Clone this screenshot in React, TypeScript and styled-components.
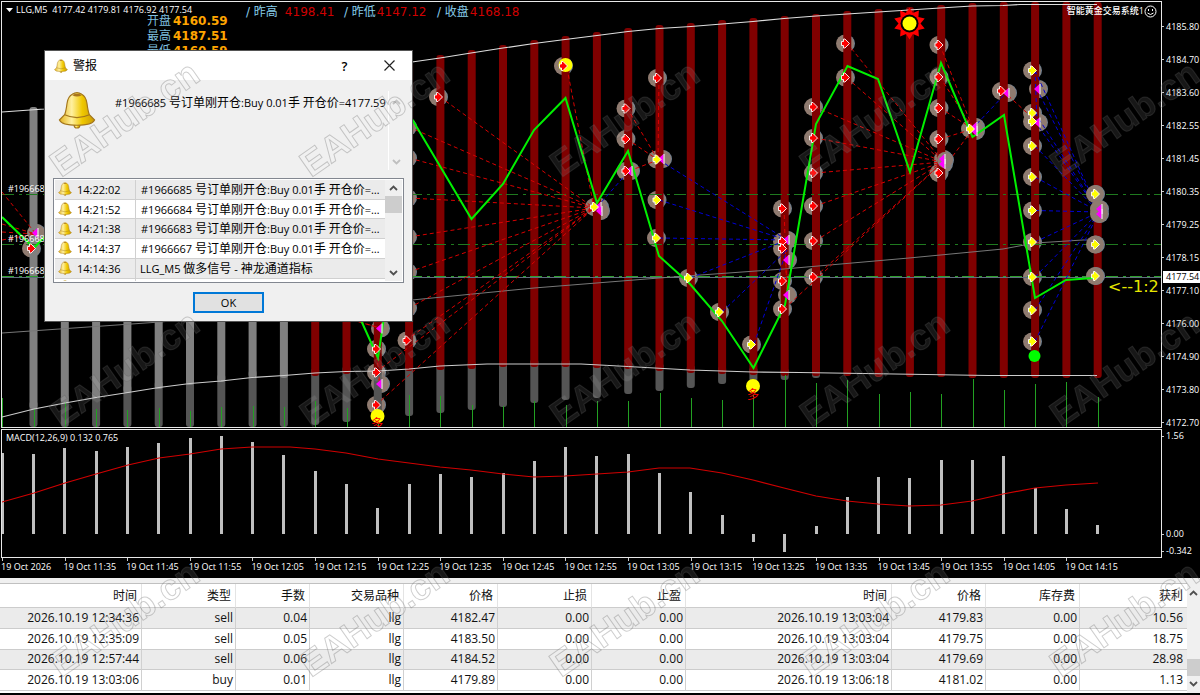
import React from "react";
import styled, { createGlobalStyle } from "styled-components";

const LATIN = '"Open Sans", "Noto Sans CJK SC", sans-serif';
const VERDANA = '"DejaVu Sans", "Noto Sans CJK SC", sans-serif';

const GlobalStyle = createGlobalStyle`
  * { box-sizing: border-box; }
  body { margin: 0; background: #000; font-family: ${LATIN}; }
  button { font-family: inherit; padding: 0; }
`;

/* ---------- chart data ---------- */

type Pt = [number, number];
const barX = (k: number) => 2.2 + 31.3 * k;
const line = (pts: Pt[]) => pts.map((p) => p.join(",")).join(" ");

const barTops = [
  0, 107, 107, 107, 107, 107, 107, 107, 107, 107, 107, 107, 107, 62, 55, 50, 45, 40, 36, 32, 28, 25, 23, 20, 18, 16, 14, 11, 9,
  7, 5, 3, 2, 2, 2, 2,
];
const bandEnds = [
  0, 409, 403, 398, 393, 389, 385, 382, 378, 378, 376, 374, 373, 371, 370, 369, 367, 367, 367, 368, 369, 371, 373, 374, 375, 376,
  376, 376, 377, 377, 377, 378, 378, 378, 378, 378,
];
const tailEnds = [
  0, 427, 427, 427, 427, 427, 427, 427, 427, 427, 425, 422, 418, 416, 413, 410, 407, 403, 400, 398, 394, 391, 388, 384, 382, 380,
  378,
];
const volumeTops = [
  398, 409, 402, 409, 410, 408, 411, 407, 406, 407, 401, 408, 412, 395, 396, 405, 406, 401, 405, 401, 401, 393, 398, 400, 395,
  375, 383, 380, 394, 392, 394, 379, 390, 384, 382, 397,
];
const macdEnds = [
  453, 454, 448, 451, 447, 443, 438, 436, 442, 455, 471, 484, 508, 484, 474, 477, 473, 461, 447, 456, 454, 473, 492, 515, 542,
  552, 526, 497, 477, 478, 460, 460, 456, 488, 509, 525,
];
const macdSignal: Pt[] = [
  [2, 502], [34, 493], [65, 483], [96, 474], [128, 465], [159, 458], [190, 454], [221, 449], [252, 447], [290, 447],
  [315, 449], [346, 453], [378, 459], [409, 463], [440, 467], [471, 470], [503, 474], [534, 477], [565, 476], [597, 474],
  [628, 472], [659, 468], [690, 468], [722, 473], [753, 480], [784, 488], [816, 496], [847, 501], [878, 504], [909, 506],
  [941, 505], [972, 501], [1003, 494], [1035, 488], [1066, 485], [1098, 483],
];
const upperBand: Pt[] = [
  [2, 112], [44, 109], [412, 62], [440, 58], [471, 53], [503, 48], [534, 43.5], [565, 39.5], [597, 35.5], [628, 31.5],
  [659, 28.5], [691, 26.5], [722, 24], [753, 21.5], [784, 18.5], [816, 16], [847, 14], [878, 12], [909, 10], [940, 8],
  [972, 6], [1003, 5.5], [1020, 4.5], [1097, 4.5],
];
const lowerBand: Pt[] = [
  [2, 417], [34, 409], [65, 403], [96, 397.5], [128, 392.5], [159, 387.5], [190, 383.5], [221, 381], [252, 377.5],
  [284, 375.5], [315, 373], [346, 371.5], [378, 371], [409, 369], [440, 366], [487, 364], [581, 364], [628, 366.5],
  [690, 370], [753, 372], [800, 372.5], [926, 374.5], [988, 375.5], [1097, 375.5],
];
const midBand: Pt[] = [
  [2, 333], [160, 322], [412, 300], [534, 288], [659, 278], [784, 269], [909, 258], [1003, 249], [1035, 243], [1083, 240],
  [1097, 240],
];
const priceLine: Pt[] = [
  [2, 217], [34, 248], [60, 220], [340, 275], [360, 318], [378, 358], [385, 310], [400, 90], [412, 119], [471.5, 219],
  [503, 184], [534, 130], [565.5, 98], [597, 203], [628, 151], [659, 256], [690, 284], [722, 321], [753.5, 368], [785, 305],
  [816, 124], [847.5, 66], [878, 79], [910, 172], [941, 63], [972.5, 137], [1004, 115], [1035, 298], [1066, 280], [1093, 278],
];

const fan = (target: Pt, sources: Pt[]): [Pt, Pt][] => sources.map((s) => [s, target]);
const k26: number[] = [107, 138, 173, 206, 241, 277];
const k33: number[] = [70.5, 113, 121.5, 146, 177, 210.5, 242, 277, 310, 341.5];

const redLinks: [Pt, Pt][] = [
  ...fan([594, 208], [
    [440, 97], [567, 68], [409, 127], [409, 158], [409, 198], [409, 237], [409, 272], [409, 308], [406, 340], [376, 372],
    [376, 405],
  ]),
  ...fan([658, 160], [[627, 108], [627, 139], [659, 78], [629, 171]]),
  ...fan([943, 162], [...k26.map((y): Pt => [815, y]), [847, 43], [847, 78], [784, 309]]),
  ...fan([973, 129], [[940, 45], [940, 77], [940, 108], [940, 139], [940, 173]]),
  ...fan([787, 295], [[784, 208], [785, 241]]),
  ...fan([1037, 122], [[1003, 91]]),
  ...fan([380, 328], [[345, 318], [360, 322]]),
  ...fan([380, 384], [[376, 349], [376, 372]]),
  ...fan([36, 234], [[2, 192], [2, 224], [2, 232], [2, 240]]),
];
const blueLinks: [Pt, Pt][] = [
  ...fan([787, 240], [[659, 160], [659, 200], [659, 238], [690, 278]]),
  ...fan([787, 250], [[722, 312], [754, 344]]),
  ...fan([629, 171], [[597, 207]]),
  ...fan([1006, 93], [[972, 129]]),
  ...fan([1037, 122], [[1035, 70]]),
  ...fan([1099, 212], [...k33.map((y): Pt => [1035, y]), [1037, 89]]),
];

const redMarks: Pt[] = [
  [438, 97], [563, 66], [625.5, 108.5], [625.5, 139], [625.5, 171], [657, 78], [782, 208.5], [782, 241.5], [782, 248.5],
  [782, 281], [782, 309], ...k26.map((y): Pt => [813, y]), [845, 43.5], [845, 77.5], [938.5, 45], [938.5, 77],
  [938.5, 108], [938.5, 139], [938.5, 173], [1001, 91], [31, 248.5], [376, 349], [376, 372.5], [376, 405], [406.5, 340.5],
];
const yellowMarks: Pt[] = [
  [656.5, 159.5], [656.5, 200], [594, 207], [656, 238], [688, 278], [719, 312], [751, 344.5], [970, 129],
  ...k33.map((y): Pt => [1032, y]),
];
const frontYellow: Pt[] = [[1095, 194], [1095, 244.5], [1095, 276]];
const closeMarks: Pt[] = [
  [629, 171], [661, 159], [598, 207], [599, 211], [786, 240], [786, 260], [786, 295], [942, 159], [942, 164], [974, 127],
  [974, 131], [1006, 93], [1037, 89], [1037, 122.5], [35, 233], [379, 328.5], [379, 384],
];
const hiddenHalos: Pt[] = [[407, 127], [407, 158], [407, 198], [407, 237], [407, 272], [407, 308]];

const prices = [
  "4185.80", "4184.70", "4183.60", "4182.55", "4181.45", "4180.35", "4179.25", "4178.15", "4177.10", "4176.00", "4174.90",
  "4173.80", "4172.70",
];
const times = [
  "2026", "11:35", "11:45", "11:55", "12:05", "12:15", "12:25", "12:35", "12:45", "12:55", "13:05", "13:15", "13:25", "13:35",
  "13:45", "13:55", "14:05", "14:15",
];

const sunPoints = Array.from({ length: 20 }, (_, i) => {
  const r = i % 2 ? 11 : 16;
  const a = (i * Math.PI) / 10 - Math.PI / 2;
  return `${(909.5 + r * Math.cos(a)).toFixed(1)},${(23.5 + r * Math.sin(a)).toFixed(1)}`;
}).join(" ");

/* ---------- chart layout ---------- */

const Terminal = styled.main`
  position: relative;
  overflow: hidden;
  background: #000;
  color: #fff;
`;

const ChartRow = styled.section`
  display: grid;
  grid-template-columns: minmax(0, 1fr) 38px;
  padding: 1px 0 0 1px;
`;

const Panel = styled.div<{ $h: number }>`
  position: relative;
  height: ${(p) => p.$h}px;
  border: 1px solid #e8e8e8;
  overflow: hidden;
`;

const Plot = styled.svg`
  display: block;
  width: 100%;
  height: 100%;
`;

const PriceScale = styled.div`
  position: relative;
  padding-top: 9px;
  height: 427px;
`;

const ScaleLabel = styled.div<{ $h: number }>`
  display: flex;
  align-items: center;
  gap: 2px;
  height: ${(p) => p.$h}px;
  font-size: 9px;
  line-height: 12px;
  white-space: nowrap;
  &::before {
    content: "";
    width: 2px;
    height: 1px;
    background: #ccc;
  }
`;

const MacdScale = styled.div`
  display: flex;
  flex-direction: column;
  gap: 3px;
  height: 129px;
`;

const Spacer = styled.div`
  flex: 1;
`;

const CurrentPrice = styled.div`
  position: absolute;
  top: 270px;
  left: 1px;
  right: 0;
  height: 12px;
  padding-left: 3px;
  background: #fff;
  color: #000;
  font-size: 9px;
  line-height: 12px;
`;

const TimeScale = styled.div`
  display: flex;
  height: 20px;
  padding: 0 72px 0 1px;
`;

const TimeLabel = styled.div`
  flex: 1 1 0;
  min-width: 0;
  padding-top: 2px;
  font-size: 9px;
  line-height: 14px;
  white-space: nowrap;
  background: linear-gradient(#ccc, #ccc) 1px 0 / 1px 3px no-repeat;
`;

const ChartTitle = styled.div`
  position: absolute;
  top: 1px;
  left: 4px;
  display: flex;
  align-items: center;
  gap: 3px;
  font-size: 9px;
  line-height: 14px;
  white-space: pre;
`;

const EaName = styled.div`
  position: absolute;
  top: 2px;
  right: 4px;
  display: flex;
  align-items: center;
  font-size: 9px;
  line-height: 14px;
  font-weight: 500;
`;

const DayPrices = styled.div`
  position: absolute;
  top: 12px;
  left: 145px;
  font-family: ${VERDANA};
  font-size: 12px;
  line-height: 15px;
  color: #7fbfdf;
`;

const DayPrice = styled.div`
  display: flex;
  gap: 2px;
  b {
    color: #ffa500;
  }
`;

const Yesterday = styled.div`
  position: absolute;
  top: 2px;
  left: 244px;
  display: flex;
  font-family: ${VERDANA};
  font-size: 12px;
  line-height: 16px;
  color: #87ceeb;
  white-space: pre;
  em {
    font-style: normal;
    color: #d00000;
  }
`;

const YesterdayItem = styled.div<{ $w: number; $gap: number }>`
  display: flex;
  gap: ${(p) => p.$gap}px;
  width: ${(p) => p.$w}px;
`;

const Halo = ({ p, r = 9 }: { p: Pt; r?: number }) => (
  <g>
    <circle cx={p[0] + 1} cy={p[1]} r={r} fill="#708090" />
    <circle cx={p[0]} cy={p[1]} r={r} fill="#8f7b70" />
  </g>
);

const Diamond = ({ p, color }: { p: Pt; color: string }) => (
  <path
    transform={`translate(${p[0]} ${p[1]})`}
    d="M-3.500 -2 H-1.500 V-4.500 H0 L4.500 0 L0 4.500 H-1.500 V2 H-3.500 Z"
    fill={color}
    stroke="#fff"
    strokeWidth="0.900"
  />
);

const CloseArrow = ({ p }: { p: Pt }) => (
  <g transform={`translate(${p[0]} ${p[1]})`}>
    <path d="M2.500 -5 V5 L-3 0 Z" fill="#ff00ff" />
    <path d="M3 -5 V5" stroke="#fff" strokeWidth="1" />
  </g>
);

const PriceChart = () => (
  <Plot viewBox="2 2 1159 425" preserveAspectRatio="xMinYMin slice" aria-label="LLG M5">
    <g>
      {hiddenHalos.map((p, i) => <Halo key={i} p={p} />)}
      {redMarks.map((p, i) => <Halo key={i} p={p} />)}
      {yellowMarks.map((p, i) => <Halo key={i} p={p} />)}
      {closeMarks.map((p, i) => <Halo key={i} p={[p[0] + 1, p[1]]} />)}
    </g>
    {barTops.map((top, k) =>
      k === 0 ? null : (
        <g key={k}>
          {tailEnds[k] && <rect x={barX(k) - 4} y={bandEnds[k] - 8} width={8} height={tailEnds[k] - bandEnds[k] + 8} rx={3} fill="#555" />}
          <rect x={barX(k) - 4} y={top} width={8} height={bandEnds[k] - top} rx={3} fill={k < 10 ? "#808080" : "#800000"} />
        </g>
      )
    )}
    <g stroke="#1f7a1f" strokeDasharray="12 5 3 4">
      <path d="M2 194.500 H1161 M2 244.500 H1161" />
    </g>
    <path d="M2 277.500 H1161" stroke="#5f6f7f" />
    <path d="M2 276.500 H1161" stroke="#2ea02e" strokeDasharray="12 5 3 4" />
    <polyline points={line(midBand)} fill="none" stroke="#777" />
    <g stroke="#22a022">
      {volumeTops.map((y, k) => <path key={k} d={`M${Math.round(barX(k)) + 0.5} ${y} V427`} />)}
    </g>
    <polyline points={line(upperBand)} fill="none" stroke="#ddd" strokeWidth="1.2" />
    <polyline points={line(lowerBand)} fill="none" stroke="#ccc" strokeWidth="1.2" />
    <g stroke="#d80000" strokeDasharray="4 3">
      {redLinks.map(([a, b], i) => <path key={i} d={`M${a} L${b}`} />)}
    </g>
    <g stroke="#0000d8" strokeDasharray="4 3">
      {blueLinks.map(([a, b], i) => <path key={i} d={`M${a} L${b}`} />)}
    </g>
    <circle cx="565.5" cy="65" r="7" fill="#ff0" />
    {frontYellow.map((p, i) => <Halo key={i} p={p} />)}
    <Halo p={[1099, 209]} r={9} />
    <Halo p={[1099, 214]} r={9} />
    <Halo p={[945, 160]} r={8} />
    <polyline points={line(priceLine)} fill="none" stroke="#00f000" strokeWidth="2" />
    {closeMarks.map((p, i) => <CloseArrow key={i} p={p} />)}
    <CloseArrow p={[1099, 209]} />
    <CloseArrow p={[1099, 214]} />
    {redMarks.map((p, i) => <Diamond key={i} p={p} color="#f00" />)}
    {[...yellowMarks, ...frontYellow].map((p, i) => <Diamond key={i} p={p} color="#ff0" />)}
    <polygon points={sunPoints} fill="#f00" />
    <circle cx="909.5" cy="23.5" r="9" fill="#000" />
    <circle cx="909.5" cy="23.5" r="7" fill="#ff0" />
    <circle cx="1034.500" cy="356" r="6" fill="#0f0" />
    <g fontSize="12" fill="#f00" textAnchor="middle" fontFamily='"Noto Sans CJK SC", sans-serif'>
      <circle cx="753" cy="386" r="7" fill="#ff0" />
      <text x="753" y="399">多</text>
      <circle cx="377.500" cy="416" r="7" fill="#ff0" />
      <text x="377" y="428">多</text>
    </g>
    <g fontSize="9" fill="#fff">
      <text x="8" y="192">#1966685</text>
      <text x="8" y="242">#1966684</text>
      <text x="8" y="274">#1966683</text>
    </g>
    <text x="1108" y="292" fontSize="16" fill="#e6e600" fontFamily="DejaVu Sans">{"<--1:2"}</text>
  </Plot>
);

const MacdChart = () => (
  <Plot viewBox="2 430 1159 127" preserveAspectRatio="xMinYMin slice" aria-label="MACD">
    <g fill="#c0c0c0">
      {macdEnds.map((y, k) => (
        <rect key={k} x={Math.round(barX(k) - 1.5)} y={Math.min(y, 534)} width={3} height={Math.abs(534 - y)} />
      ))}
    </g>
    <polyline points={line(macdSignal)} fill="none" stroke="#d00000" strokeWidth="1.2" />
  </Plot>
);

/* ---------- alert window ---------- */

const Dialog = styled.section`
  position: absolute;
  top: 51px;
  left: 45px;
  width: 367px;
  height: 270px;
  display: flex;
  flex-direction: column;
  background: #f0f0f0;
  color: #000;
  font-size: 11px;
  box-shadow: 0 0 0 1px #555;
`;

const TitleBar = styled.header`
  display: flex;
  align-items: center;
  height: 29px;
  padding: 0 12px 0 9px;
  background: #fff;
`;

const DialogTitle = styled.h1`
  flex: 1;
  margin: 0 0 0 5px;
  font-size: 12px;
  font-weight: 400;
  line-height: 16px;
`;

const TitleButtons = styled.div`
  display: flex;
  gap: 24px;
`;

const TitleButton = styled.button`
  display: flex;
  justify-content: center;
  align-items: center;
  width: 21px;
  height: 24px;
  border: 0;
  background: none;
  color: #000;
  font-size: 13px;
  font-weight: 600;
`;

const Message = styled.div`
  display: grid;
  grid-template-columns: 57px minmax(0, 1fr) 16px;
  height: 98px;
  padding: 11px 8px 8px 13px;
`;

const MessageText = styled.p`
  margin: 0;
  padding-top: 4px;
  line-height: 16px;
  white-space: nowrap;
`;

const Cjk = styled.span`
  font-size: 12px;
`;

const MessageScroll = styled.div`
  display: flex;
  flex-direction: column;
  justify-content: space-between;
  align-items: center;
  padding: 8px 0 5px;
  border-left: 1px solid #fff;
`;

const ListFrame = styled.div`
  display: grid;
  grid-template-columns: minmax(0, 1fr) 17px;
  height: 105px;
  margin: 0 8px;
  padding: 1px;
  border: 1px solid #828790;
  background: #fff;
  overflow: hidden;
`;

const ListView = styled.div`
  height: 101px;
  overflow: hidden;
`;

const AlertTable = styled.table`
  width: 100%;
  height: 117px;
  border-collapse: separate;
  border-spacing: 0;
  table-layout: fixed;
  line-height: 15px;
  tr:nth-child(odd) td {
    background: #ebebeb;
  }
  td {
    padding: 0;
    border-bottom: 1px solid #d0d0d0;
    white-space: nowrap;
  }
`;

const TimeCell = styled.td`
  width: 81px;
  border-right: 1px solid #d0d0d0;
  span {
    display: flex;
    align-items: center;
    gap: 5px;
    padding-left: 3px;
  }
`;

const TextCell = styled.td<{ $indent: number }>`
  div {
    padding-left: ${(p) => p.$indent}px;
    overflow: hidden;
  }
`;

const Scroll = styled.div`
  display: flex;
  flex-direction: column;
  align-items: center;
  background: #f0f0f0;
`;

const Thumb = styled.div<{ $h: number }>`
  width: 100%;
  height: ${(p) => p.$h}px;
  background: #cdcdcd;
`;

const Arrow = styled.button`
  display: flex;
  align-items: center;
  justify-content: center;
  width: 13px;
  height: 16px;
  border: 0;
  background: none;
`;

const Actions = styled.footer`
  display: flex;
  justify-content: center;
  padding: 9px 0 0;
`;

const OkButton = styled.button`
  width: 71px;
  height: 21px;
  border: 2px solid #0078d7;
  background: #e1e1e1;
  color: #000;
  font-size: 11px;
  line-height: 15px;
`;

const Bell = ({ size, id }: { size: number; id: string }) => (
  <svg width={size} height={size} viewBox="0 0 40 40" aria-hidden="true">
    <defs>
      <linearGradient id={id} x1="0" x2="1">
        <stop offset="0" stopColor="#e3b21c" />
        <stop offset="0.35" stopColor="#fff0a0" />
        <stop offset="0.65" stopColor="#f0c800" />
        <stop offset="1" stopColor="#c99a06" />
      </linearGradient>
    </defs>
    <g fill={`url(#${id})`} stroke="#a3761c" strokeWidth="1.200">
      <circle cx="20" cy="36" r="3" />
      <path d="M15 3.500 Q20 0 25 3.500 Q29.500 6 30.500 13 Q31.500 21 33 25 L38.500 30.500 Q36 36 20 36 Q4 36 1.500 30.500 L7 25 Q8.500 21 9.500 13 Q10.500 6 15 3.500 Z" />
      <path d="M7 25 Q20 31 33 25" fill="none" />
    </g>
    <path d="M15 4.500 Q20 1.500 25 4.500 Q20 7 15 4.500 Z" fill="#a8741c" />
  </svg>
);

const Chevron = ({ down, color = "#505050" }: { down?: boolean; color?: string }) => (
  <svg width="9" height="6" viewBox="0 0 9 6" aria-hidden="true">
    <path d={down ? "M1 1 L4.500 4.500 L8 1" : "M1 5 L4.500 1.500 L8 5"} fill="none" stroke={color} strokeWidth="1.800" />
  </svg>
);

const CloseGlyph = () => (
  <svg width="11" height="11" viewBox="0 0 11 11" aria-hidden="true">
    <path d="M0.500 0.500 L10.500 10.500 M10.500 0.500 L0.500 10.500" stroke="#222" strokeWidth="1.200" />
  </svg>
);

const Mixed = ({ text }: { text: string }) => (
  <>
    {text.split(/([\u4e00-\u9fff]+)/).map((part, i) => (i % 2 ? <Cjk key={i}>{part}</Cjk> : part))}
  </>
);

const alerts = [
  ["14:22:02", "#1966685 号订单刚开仓:Buy 0.01手 开仓价=…"],
  ["14:21:52", "#1966684 号订单刚开仓:Buy 0.01手 开仓价=…"],
  ["14:21:38", "#1966683 号订单刚开仓:Buy 0.01手 开仓价=…"],
  ["14:14:37", "#1966667 号订单刚开仓:Buy 0.01手 开仓价=…"],
  ["14:14:36", "LLG_M5 做多信号 - 神龙通道指标"],
  ["", ""],
];

const AlertDialog = () => (
  <Dialog role="dialog" aria-label="警报">
    <TitleBar>
      <Bell size={14} id="bell-title" />
      <DialogTitle>警报</DialogTitle>
      <TitleButtons>
        <TitleButton aria-label="帮助">?</TitleButton>
        <TitleButton aria-label="关闭">
          <CloseGlyph />
        </TitleButton>
      </TitleButtons>
    </TitleBar>
    <Message>
      <Bell size={38} id="bell-large" />
      <MessageText>
        <Mixed text="#1966685 号订单刚开仓:Buy 0.01手 开仓价=4177.59" />
      </MessageText>
      <MessageScroll>
        <Chevron color="#bfbfbf" />
        <Chevron color="#bfbfbf" down />
      </MessageScroll>
    </Message>
    <ListFrame>
      <ListView>
        <AlertTable>
          <tbody>
            {alerts.map(([time, text], i) => (
              <tr key={i}>
                <TimeCell>
                  <span>
                    <Bell size={14} id={`bell-${i}`} />
                    {time}
                  </span>
                </TimeCell>
                <TextCell $indent={text.startsWith("#") ? 5 : 4}>
                  <div>
                    <Mixed text={text} />
                  </div>
                </TextCell>
              </tr>
            ))}
          </tbody>
        </AlertTable>
      </ListView>
      <Scroll>
        <Arrow aria-label="向上"><Chevron /></Arrow>
        <Thumb $h={17} />
        <Spacer />
        <Arrow aria-label="向下"><Chevron down /></Arrow>
      </Scroll>
    </ListFrame>
    <Actions>
      <OkButton>OK</OkButton>
    </Actions>
  </Dialog>
);

/* ---------- account history ---------- */

const History = styled.section`
  display: grid;
  grid-template-columns: minmax(0, 1fr) 13px;
  border-top: 5px solid #f0f0f0;
  border-bottom: 2px solid #000;
  background: #fff;
  color: #111;
`;

const HistoryTable = styled.table`
  width: 100%;
  height: 108px;
  border-collapse: separate;
  border-spacing: 0;
  border-top: 1px solid #c0c0c0;
  table-layout: fixed;
  font-size: 12px;
  line-height: 16px;
  margin-bottom: 2px;
  th,
  td {
    text-align: right;
    font-weight: 400;
    border-bottom: 1px solid #ccc;
    border-right: 1px solid #d0d0d0;
    white-space: nowrap;
  }
  th {
    height: 24px;
    padding: 0 4px 0 0;
    border-right-color: #e4e4e4;
  }
  td {
    padding: 0 2px 0 0;
  }
  th:last-child,
  td:last-child {
    border-right: 0;
    padding-right: 4px;
  }
  tbody tr:nth-child(odd) td {
    background: #ebebeb;
  }
`;

const HistoryScroll = styled(Scroll)`
  padding: 2px 0 1px;
`;

const columns: [string, number][] = [
  ["时间", 142], ["类型", 94], ["手数", 74], ["交易品种", 94], ["价格", 94], ["止损", 94], ["止盈", 94], ["时间", 206],
  ["价格", 94], ["库存费", 94], ["获利", 107],
];

const Col = styled.col<{ $share: number }>`
  width: ${(p) => (p.$share / 1187) * 100}%;
`;

const orders = [
  ["2026.10.19 12:34:36", "sell", "0.04", "llg", "4182.47", "0.00", "0.00", "2026.10.19 13:03:04", "4179.83", "0.00", "10.56"],
  ["2026.10.19 12:35:09", "sell", "0.05", "llg", "4183.50", "0.00", "0.00", "2026.10.19 13:03:04", "4179.75", "0.00", "18.75"],
  ["2026.10.19 12:57:44", "sell", "0.06", "llg", "4184.52", "0.00", "0.00", "2026.10.19 13:03:04", "4179.69", "0.00", "28.98"],
  ["2026.10.19 13:03:06", "buy", "0.01", "llg", "4179.89", "0.00", "0.00", "2026.10.19 13:06:18", "4181.02", "0.00", "1.13"],
];

/* ---------- watermark ---------- */

const WatermarkLayer = styled.svg`
  position: absolute;
  inset: 0;
  width: 100%;
  height: 100%;
  pointer-events: none;
`;

const Watermark = () => (
  <WatermarkLayer aria-hidden="true">
    <defs>
      <pattern id="mark" width="250" height="250" patternUnits="userSpaceOnUse">
        <text
          transform="translate(61 178) rotate(-35)"
          fontFamily="Liberation Sans, sans-serif"
          fontSize="36"
          fontWeight="700"
          fill="rgba(255,255,255,0.09)"
          stroke="rgba(90,90,90,0.3)"
          strokeWidth="1"
        >
          EAHub.cn
        </text>
      </pattern>
    </defs>
    <rect width="100%" height="100%" fill="url(#mark)" />
  </WatermarkLayer>
);

export default function App() {
  return (
    <>
      <GlobalStyle />
      <Terminal>
        <ChartRow>
          <Panel $h={427}>
            <PriceChart />
            <ChartTitle>
              <svg width="7" height="4" viewBox="0 0 7 4" aria-hidden="true">
                <path d="M0 0 H7 L3.500 4 Z" fill="#fff" />
              </svg>
              {"LLG,M5  4177.42 4179.81 4176.92 4177.54"}
            </ChartTitle>
            <DayPrices>
              <DayPrice>开盘<b>4160.59</b></DayPrice>
              <DayPrice>最高<b>4187.51</b></DayPrice>
              <DayPrice>最低<b>4160.59</b></DayPrice>
            </DayPrices>
            <Yesterday>
              <YesterdayItem $w={98} $gap={7}>/ 昨高<em>4198.41</em></YesterdayItem>
              <YesterdayItem $w={93} $gap={1}>/ 昨低<em>4147.12</em></YesterdayItem>
              <YesterdayItem $w={93} $gap={1}>/ 收盘<em>4168.18</em></YesterdayItem>
            </Yesterday>
            <EaName>
              智能黄金交易系统1
              <svg width="13" height="13" viewBox="0 0 13 13" aria-hidden="true">
                <circle cx="6.500" cy="6.500" r="5.500" fill="none" stroke="#fff" />
                <path d="M4.500 4 V6 M8.500 4 V6 M3.500 8 Q6.500 11 9.500 8" fill="none" stroke="#fff" />
              </svg>
            </EaName>
          </Panel>
          <PriceScale>
            {prices.map((p) => <ScaleLabel key={p} $h={33}>{p}</ScaleLabel>)}
            <CurrentPrice>4177.54</CurrentPrice>
          </PriceScale>
        </ChartRow>
        <ChartRow>
          <Panel $h={129}>
            <MacdChart />
            <ChartTitle>MACD(12,26,9) 0.132 0.765</ChartTitle>
          </Panel>
          <MacdScale>
            <ScaleLabel $h={14}>1.56</ScaleLabel>
            <Spacer />
            <ScaleLabel $h={14}>0.00</ScaleLabel>
            <ScaleLabel $h={14}>-0.342</ScaleLabel>
          </MacdScale>
        </ChartRow>
        <TimeScale>
          {times.map((t) => <TimeLabel key={t}>19 Oct {t}</TimeLabel>)}
        </TimeScale>
        <History>
          <HistoryTable>
            <colgroup>
              {columns.map(([, w], i) => <Col key={i} $share={w} />)}
            </colgroup>
            <thead>
              <tr>{columns.map(([name], i) => <th key={i} scope="col">{name}</th>)}</tr>
            </thead>
            <tbody>
              {orders.map((row) => (
                <tr key={row[0]}>{row.map((cell, i) => <td key={i}>{cell}</td>)}</tr>
              ))}
            </tbody>
          </HistoryTable>
          <HistoryScroll>
            <Arrow aria-label="向上"><Chevron /></Arrow>
            <Spacer />
            <Thumb $h={17} />
            <Arrow aria-label="向下"><Chevron down /></Arrow>
          </HistoryScroll>
        </History>
        <AlertDialog />
        <Watermark />
      </Terminal>
    </>
  );
}
